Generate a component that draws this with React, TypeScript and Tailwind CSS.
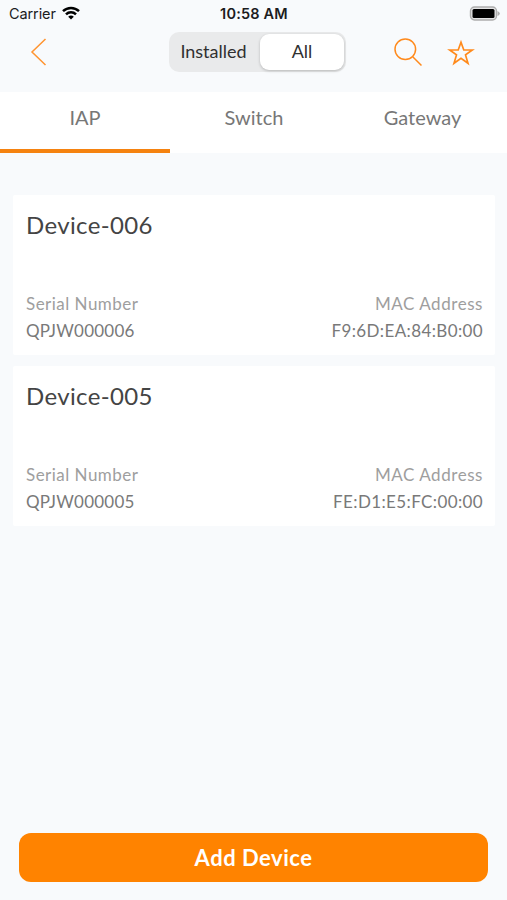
import React from "react";

type Device = { name: string; serial: string; mac: string };

const devices: Device[] = [
  { name: "Device-006", serial: "QPJW000006", mac: "F9:6D:EA:84:B0:00" },
  { name: "Device-005", serial: "QPJW000005", mac: "FE:D1:E5:FC:00:00" },
];

function StatusBar() {
  return (
    <div className="grid h-7 grid-cols-3 items-center pl-[8px] pr-[7px] font-['Inter',sans-serif] text-[#1c1c1e]">
      <div className="flex items-center gap-[6px] pl-px">
        <span className="text-[14.5px] leading-7 tracking-[-0.1px]">Carrier</span>
        <svg className="mt-[-2px]" width="18" height="14" viewBox="0 0 18 14" fill="none" stroke="#000" strokeWidth="2.5">
          <path d="M1 5.1C5.5 .8 12.500 .8 17 5.1" />
          <path d="M4 8.300C6.800 5.500 11.200 5.500 14 8.300" />
          <path d="M6.200 10.700C7.800 9.100 10.200 9.100 11.800 10.700L9 13.500Z" fill="#000" stroke="none" />
        </svg>
      </div>
      <span className="text-center text-[14.5px] font-semibold leading-7 tracking-[0.2px] whitespace-nowrap">10:58 AM</span>
      <svg className="mt-[-2px] justify-self-end" width="31" height="15" viewBox="0 0 31 15">
        <rect x="1.500" y="1" width="26" height="13" rx="4" fill="#e4e4e5" stroke="#adadad" strokeWidth="1.400" />
        <rect x="3.500" y="3" width="22" height="9" rx="1.500" fill="#000" />
        <path d="M28.500 5Q30.800 6 30.800 7.500T28.500 10Z" fill="#adadad" />
      </svg>
    </div>
  );
}

function NavBar() {
  return (
    <div className="flex h-16 items-start pl-[30px] pr-[32px] pt-[4px]">
      <svg className="mt-[5px]" width="18" height="30" viewBox="0 0 18 30" fill="none" stroke="#ff9430" strokeWidth="1.500">
        <path d="M15.500 2L2 15L15.500 28" />
      </svg>
      <div className="ml-[121px] flex h-[40px] w-[177px] rounded-[10px] bg-[#e9eaeb] p-[2px] text-[18px] text-[#303030]">
        <button className="w-[89px] pr-[4px] text-center leading-[34px] pb-[2px]">Installed</button>
        <button className="flex-1 rounded-[9px] bg-white text-center leading-[34px] pb-[2px] shadow-[0_1px_3px_rgba(0,0,0,0.22)]">All</button>
      </div>
      <svg className="ml-[47px] mt-[5px]" width="30" height="30" viewBox="0 0 30 30" fill="none" stroke="#ff8a1c" strokeWidth="1.500">
        <circle cx="12.300" cy="12.200" r="10.300" />
        <path d="M19.500 19.500L28.500 28.500" />
      </svg>
      <svg className="ml-[24px] mt-[7px]" width="28" height="28" viewBox="0 0 28 28" fill="none" stroke="#ff8a1c" strokeWidth="1.700">
        <path d="M14 3.200L16.800 11H25.300L18.500 15.900L21 24.300L14 19.300L7 24.300L9.500 15.900L2.700 11H11.200Z" />
      </svg>
    </div>
  );
}

function Tabs() {
  return (
    <div className="grid h-[61px] grid-cols-[170px_1fr_169px] bg-white text-[20px] leading-[50px] text-[#777]">
      <div className="border-b-4 border-[#f5820f] text-center">IAP</div>
      <div className="text-center">Switch</div>
      <div className="text-center">Gateway</div>
    </div>
  );
}

function DeviceCard({ device }: { device: Device }) {
  return (
    <div className="flex h-[160px] flex-col justify-between rounded-[2px] bg-white pb-[11px] pl-[13px] pr-[12px] pt-[14px]">
      <div className="text-[24px] leading-8 tracking-[0.35px] text-[#444]">{device.name}</div>
      <div className="flex justify-between text-[17px] leading-[27px]">
        <div>
          <div className="tracking-[0.48px] text-[#9e9e9e]">Serial Number</div>
          <div className="tracking-[0.22px] text-[#797979]">{device.serial}</div>
        </div>
        <div className="text-right">
          <div className="tracking-[0.55px] text-[#9e9e9e]">MAC Address</div>
          <div className="tracking-[0.38px] text-[#797979]">{device.mac}</div>
        </div>
      </div>
    </div>
  );
}

export default function App() {
  return (
    <div className="flex h-[900px] w-[507px] flex-col overflow-hidden bg-[#f8fafc] font-['Lato',sans-serif]">
      <StatusBar />
      <NavBar />
      <Tabs />
      <div className="mt-[42px] flex flex-1 flex-col gap-[11px] pl-[13px] pr-[12px]">
        {devices.map((device) => (
          <DeviceCard key={device.name} device={device} />
        ))}
      </div>
      <button className="mx-[19px] mb-[18px] h-[49px] rounded-[12px] bg-[#ff8300] pb-px text-[22px] font-bold tracking-[0.5px] text-white">
        Add Device
      </button>
    </div>
  );
}
